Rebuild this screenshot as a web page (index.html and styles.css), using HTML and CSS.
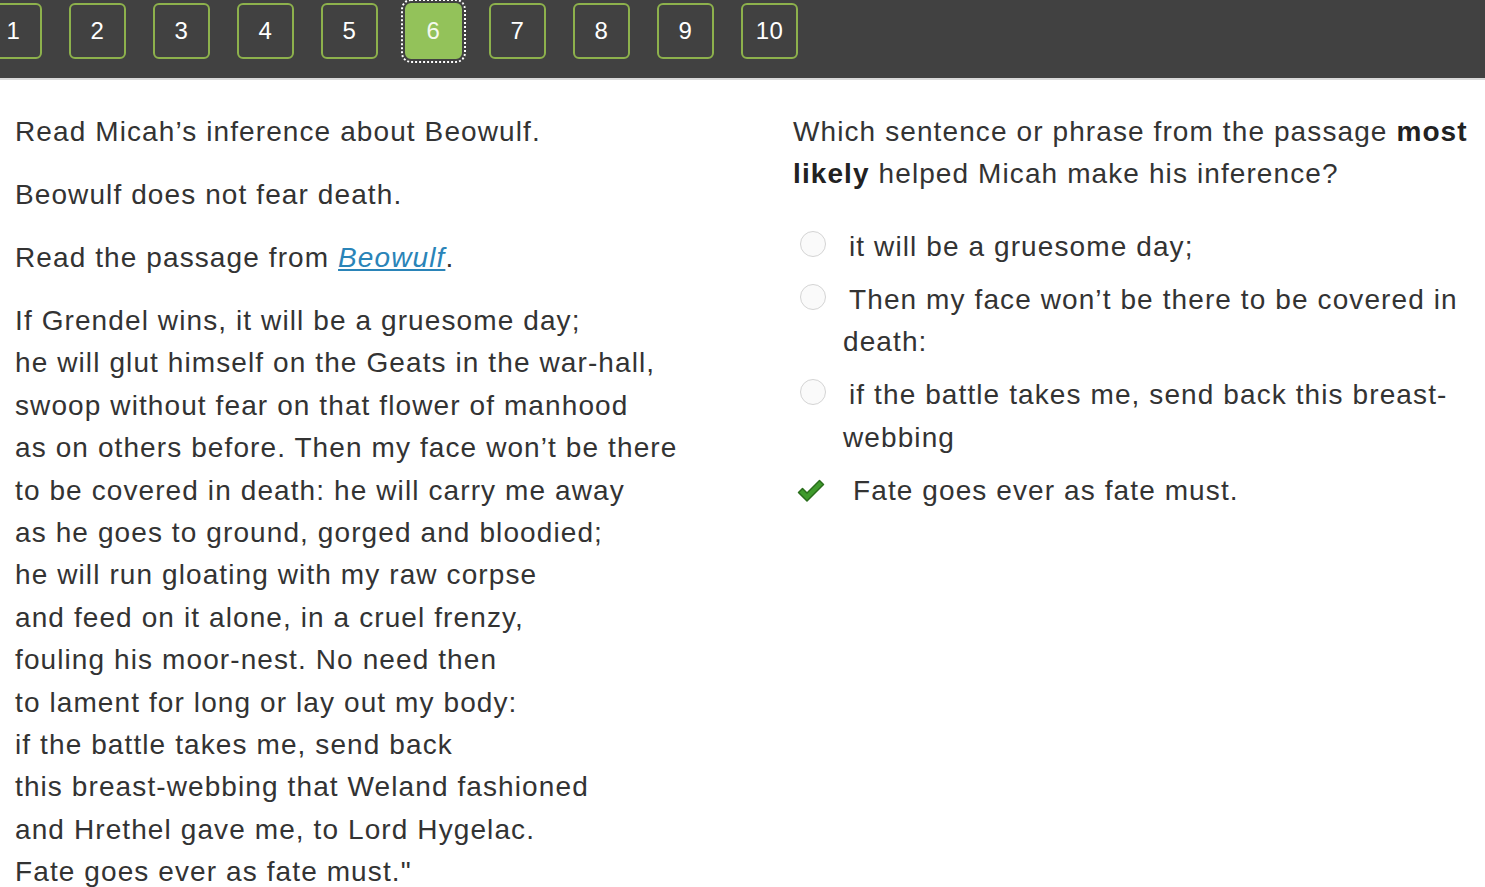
FILE: index.html
```html
<!DOCTYPE html>
<html lang="en">
<head>
<meta charset="utf-8">
<title>Beowulf question</title>
<link rel="stylesheet" href="styles.css">
</head>
<body>
<nav class="topbar">
  <div class="pager">
    <span class="page">1</span>
    <span class="page">2</span>
    <span class="page">3</span>
    <span class="page">4</span>
    <span class="page">5</span>
    <span class="page page-active">6</span>
    <span class="page">7</span>
    <span class="page">8</span>
    <span class="page">9</span>
    <span class="page">10</span>
  </div>
</nav>
<main class="content">
  <section class="passage">
    <p class="para">Read Micah’s inference about Beowulf.</p>
    <p class="para">Beowulf does not fear death.</p>
    <p class="para">Read the passage from <a class="title-link" href="#">Beowulf</a>.</p>
    <p class="para">If Grendel wins, it will be a gruesome day;<br>
he will glut himself on the Geats in the war-hall,<br>
swoop without fear on that flower of manhood<br>
as on others before. Then my face won’t be there<br>
to be covered in death: he will carry me away<br>
as he goes to ground, gorged and bloodied;<br>
he will run gloating with my raw corpse<br>
and feed on it alone, in a cruel frenzy,<br>
fouling his moor-nest. No need then<br>
to lament for long or lay out my body:<br>
if the battle takes me, send back<br>
this breast-webbing that Weland fashioned<br>
and Hrethel gave me, to Lord Hygelac.<br>
Fate goes ever as fate must."</p>
  </section>
  <section class="question">
    <p class="prompt">Which sentence or phrase from the passage <b>most likely</b> helped Micah make his inference?</p>
    <ul class="options">
      <li class="option"><span class="radio"></span><span class="opt-text">it will be a gruesome day;</span></li>
      <li class="option"><span class="radio"></span><span class="opt-text">Then my face won’t be there to be covered in death:</span></li>
      <li class="option"><span class="radio"></span><span class="opt-text">if the battle takes me, send back this breast-webbing</span></li>
      <li class="option option-correct"><span class="check"><svg width="30" height="26" viewBox="0 0 30 26"><path d="M2.5 14.5 L6.5 10.5 L11 15 L23.5 2.5 L27.5 6.5 L11 23 Z" fill="#3f9a2c" stroke="#2a6e1c" stroke-width="1.5" stroke-linejoin="round"/></svg></span><span class="opt-text">Fate goes ever as fate must.</span></li>
    </ul>
  </section>
</main>
</body>
</html>
```

FILE: styles.css
```css
html, body {
  margin: 0;
  padding: 0;
  background: #ffffff;
}
body {
  font-family: "Liberation Sans", Arial, Helvetica, sans-serif;
  color: #333333;
  overflow: hidden;
}
.topbar {
  height: 78px;
  background: #414141;
  border-bottom: 2px solid #d9d9d9;
  overflow: hidden;
}
.pager {
  display: flex;
  gap: 27px;
  margin-left: -15px;
  padding-top: 3px;
}
.page {
  flex: 0 0 auto;
  box-sizing: border-box;
  width: 57px;
  height: 56px;
  border: 2px solid #8db14c;
  border-radius: 6px;
  display: flex;
  align-items: center;
  justify-content: center;
  color: #ffffff;
  font-size: 24px;
  letter-spacing: 0.5px;
}
.page-active {
  background: #93c25a;
  border-color: #93c25a;
  color: #f4f9ee;
  outline: 2px dotted #ffffff;
  outline-offset: 2px;
}
.content {
  display: grid;
  grid-template-columns: 745px 682px;
  column-gap: 33px;
  padding: 31px 0 0 15px;
  font-size: 28px;
  letter-spacing: 1.1px;
  line-height: 42.4px;
}
.para {
  margin: 0 0 20.6px 0;
}
.title-link {
  color: #2a84b8;
  font-style: italic;
  text-decoration: underline;
}
.prompt {
  margin: 0 0 30px 0;
}
.prompt b {
  color: #222222;
}
.options {
  list-style: none;
  margin: 0;
  padding: 0;
  display: flex;
  flex-direction: column;
  gap: 10.6px;
}
.option {
  display: flex;
  align-items: flex-start;
}
.radio {
  flex: 0 0 auto;
  box-sizing: border-box;
  width: 26px;
  height: 26px;
  margin: 5px 17px 0 7px;
  border-radius: 50%;
  border: 1.5px solid #d4d4d4;
  background: #fafafa;
}
.opt-text {
  text-indent: 6px;
}
.check {
  flex: 0 0 auto;
  width: 30px;
  height: 26px;
  margin: 8px 16px 0 3px;
  display: flex;
}
.option-correct .opt-text {
  text-indent: 11px;
}
```
